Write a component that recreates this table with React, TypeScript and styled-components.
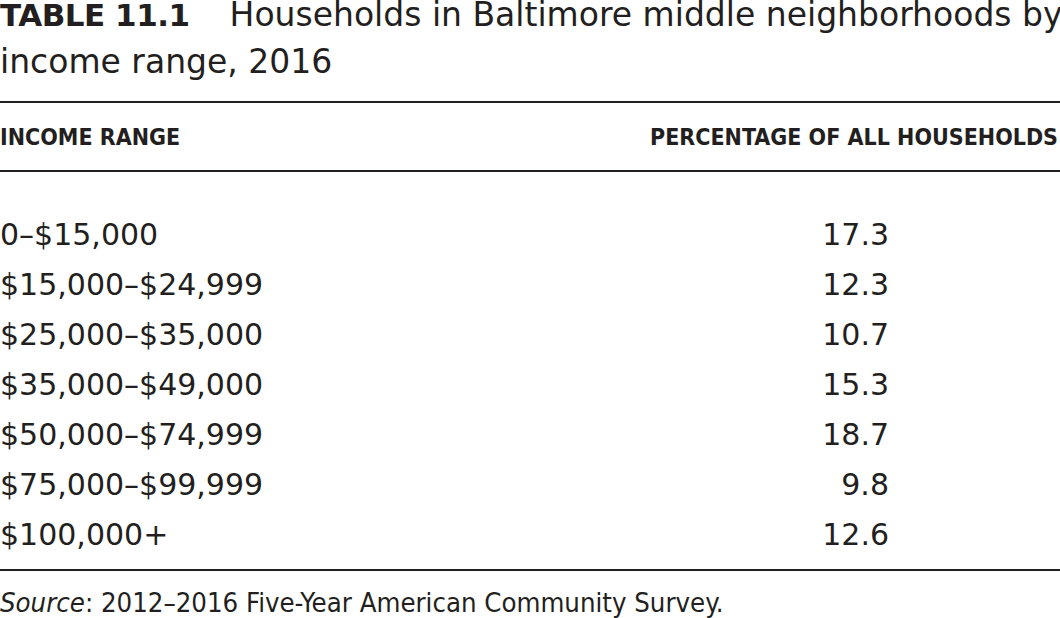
import React from 'react';
import styled, { createGlobalStyle } from 'styled-components';

const Global = createGlobalStyle`
  html, body { margin: 0; padding: 0; background: #ffffff; }
  body { color: #231f20; font-family: "DejaVu Sans", sans-serif; }
`;

const Page = styled.div`
  width: 1060px;
  height: 618px;
  overflow: hidden;
  display: flex;
  flex-direction: column;
`;

const Caption = styled.h1`
  margin: 0 0 24px 0;
  font-weight: normal;
  font-size: 33px;
  display: flex;
  flex-direction: column;
  gap: 17px;
`;

const CaptionLine = styled.div`
  line-height: 30px;
  white-space: nowrap;
`;

const Label = styled.span`
  font-weight: bold;
  font-size: 31px;
  letter-spacing: -0.5px;
  margin-right: 40px;
`;

const Rule = styled.div`
  height: 2px;
  background: #231f20;
`;

const HeaderRow = styled.div`
  display: flex;
  justify-content: space-between;
  align-items: center;
  height: 67px;
  font-family: "DejaVu Sans Condensed", "DejaVu Sans", sans-serif;
  font-stretch: condensed;
  font-weight: bold;
  font-size: 23px;
`;

const HeadCell = styled.div<{ $right?: boolean }>`
  padding-right: ${(p) => (p.$right ? '2px' : '0')};
`;

const Body = styled.div`
  padding: 37px 0 10px 0;
  display: flex;
  flex-direction: column;
`;

const Row = styled.div`
  display: grid;
  grid-template-columns: 1fr auto;
  align-items: center;
  height: 50px;
  font-size: 30px;
`;

const Value = styled.div`
  text-align: right;
  padding-right: 171px;
`;

const Source = styled.div`
  padding-top: 16px;
  font-family: "DejaVu Sans Condensed", "DejaVu Sans", sans-serif;
  font-stretch: condensed;
  font-size: 27.3px;
  white-space: nowrap;
`;

const rows: [string, string][] = [
  ['0–$15,000', '17.3'],
  ['$15,000–$24,999', '12.3'],
  ['$25,000–$35,000', '10.7'],
  ['$35,000–$49,000', '15.3'],
  ['$50,000–$74,999', '18.7'],
  ['$75,000–$99,999', '9.8'],
  ['$100,000+', '12.6'],
];

export default function App() {
  return (
    <Page>
      <Global />
      <Caption>
        <CaptionLine>
          <Label>TABLE 11.1</Label>Households in Baltimore middle neighborhoods by
        </CaptionLine>
        <CaptionLine>income range, 2016</CaptionLine>
      </Caption>
      <Rule />
      <HeaderRow>
        <HeadCell>INCOME RANGE</HeadCell>
        <HeadCell $right>PERCENTAGE OF ALL HOUSEHOLDS</HeadCell>
      </HeaderRow>
      <Rule />
      <Body>
        {rows.map(([range, pct]) => (
          <Row key={range}>
            <div>{range}</div>
            <Value>{pct}</Value>
          </Row>
        ))}
      </Body>
      <Rule />
      <Source>
        <em>Source</em>: 2012–2016 Five-Year American Community Survey.
      </Source>
    </Page>
  );
}
